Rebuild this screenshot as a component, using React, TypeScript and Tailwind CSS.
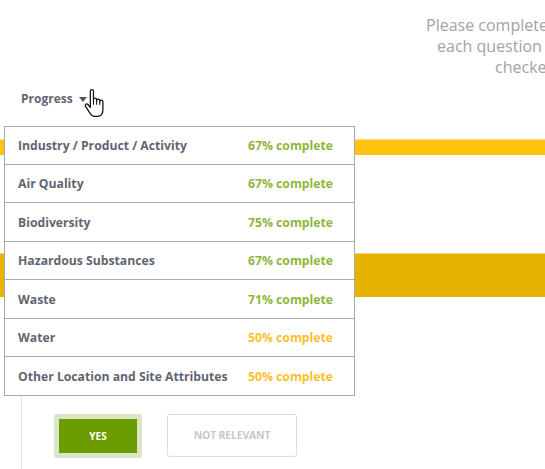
import React from "react";

const rows: { label: string; pct: number; h: string }[] = [
  { label: "Industry / Product / Activity", pct: 67, h: "h-[35px]" },
  { label: "Air Quality", pct: 67, h: "h-[35px]" },
  { label: "Biodiversity", pct: 75, h: "h-[36px]" },
  { label: "Hazardous Substances", pct: 67, h: "h-[35px]" },
  { label: "Waste", pct: 71, h: "h-[36px]" },
  { label: "Water", pct: 50, h: "h-[35px]" },
  { label: "Other Location and Site Attributes", pct: 50, h: "h-[36px]" },
];

function HandCursor() {
  return (
    <svg
      width="22"
      height="30"
      viewBox="0 0 21 28.5"
      className="absolute left-[83px] top-[88px]"
    >
      <path
        d="M7 16 V3 a1.5 1.5 0 0 1 3 0 V11 a1.5 1.5 0 0 1 3 0 V12 a1.5 1.5 0 0 1 3 0 V13 a1.5 1.5 0 0 1 3 0 V21 c0 3.5 -2 6 -5 6 H11 c-2 0 -3.5 -1.5 -5 -4 L2.5 17.5 a1.4 1.4 0 0 1 2.2 -1.8 L7 18.5 Z"
        fill="#fff"
        stroke="#111"
        strokeWidth="1.2"
        strokeLinejoin="round"
      />
      <path d="M10 11 V16 M13 12 V16 M16 13 V16" stroke="#111" strokeWidth="1" fill="none" />
    </svg>
  );
}

export default function App() {
  return (
    <div
      className="relative w-[545px] h-[469px] overflow-hidden bg-white"
      style={{ fontFamily: '"Open Sans", sans-serif' }}
    >
      <div className="pt-[15px] text-[16px] leading-[21px] text-[#a3a3a3] whitespace-nowrap">
        <div className="pl-[426px]">Please complete all</div>
        <div className="pl-[437px]">each question and</div>
        <div className="pl-[495px]">checked.</div>
      </div>

      <div className="mt-[12px] h-[18px] pl-[21px] flex items-center gap-[6px]">
        <span className="text-[12px] leading-[18px] font-bold text-[#5f6572]">Progress</span>
        <span className="w-0 h-0 border-l-[4px] border-r-[4px] border-t-[5px] border-l-transparent border-r-transparent border-t-[#555] mt-[1px]" />
      </div>

      <div className="mt-[31px] h-[16px] bg-[#fec410] border-t border-[#fde08a]" />
      <div className="mt-[98px] h-[44px] bg-[#e6b400] border-t border-[#f0d77e]" />

      <div className="ml-[21px] border-l border-[#e3e3e3] pt-[117px] pl-[32px] h-[200px]">
        <div className="flex items-start gap-[25px]">
          <div className="w-[88px] h-[44px] rounded-[3px] bg-[#dbe4c7] p-[5px]">
            <div className="w-full h-full bg-[#6b9c00] flex items-center justify-center text-[10px] font-bold text-white">
              YES
            </div>
          </div>
          <div className="w-[130px] h-[43px] rounded-[3px] border border-[#dcdcdc] flex items-center justify-center text-[10.5px] font-bold text-[#c9c9c9] tracking-[-0.2px]">
            NOT RELEVANT
          </div>
        </div>
      </div>

      <div className="absolute left-[4px] top-[126px] w-[351px] bg-white border border-[#ababab]">
        {rows.map((r, i) => (
          <div
            key={r.label}
            className={`${r.h} ${i > 0 ? "border-t border-[#ababab]" : ""} box-content flex items-center justify-between pl-[13px] pr-[21px] pt-[2px] text-[12.2px] font-bold`}
          >
            <span className="text-[#5f6572]">{r.label}</span>
            <span className={r.pct >= 60 ? "text-[#8fb63c]" : "text-[#fbc02d]"}>
              {r.pct}% complete
            </span>
          </div>
        ))}
      </div>

      <HandCursor />
    </div>
  );
}
